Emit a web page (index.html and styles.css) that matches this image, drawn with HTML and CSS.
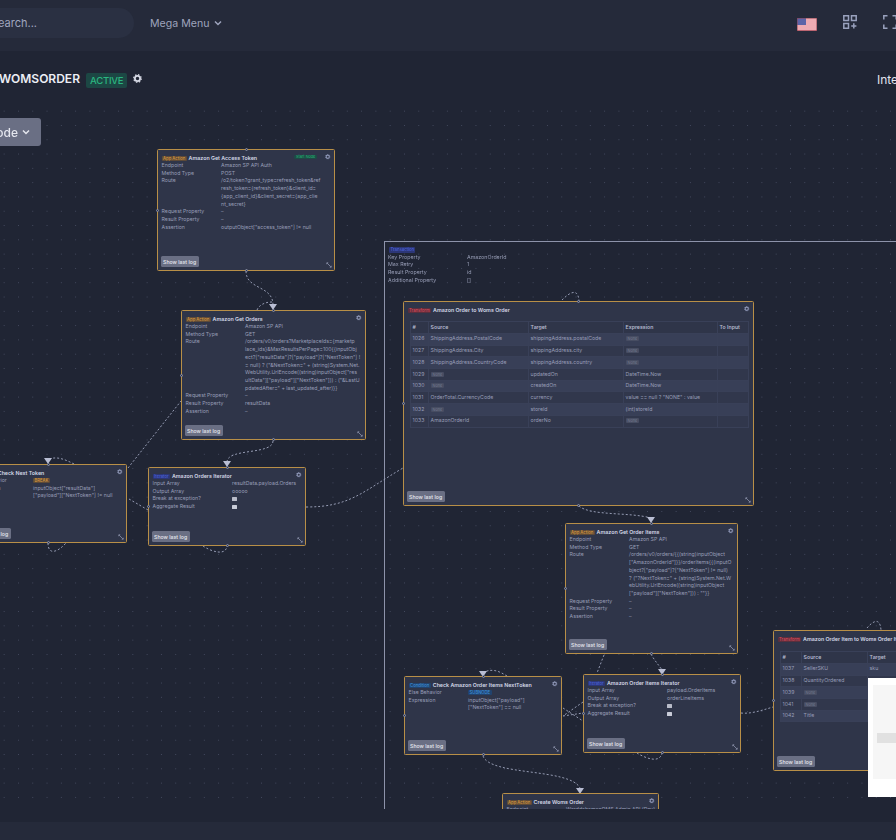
FILE: index.html
```html
<!DOCTYPE html>
<html>
<head>
<meta charset="UTF-8">
<meta name="viewport" content="width=device-width, initial-scale=1">
<title>WOMSORDER</title>
<link rel="stylesheet" href="styles.css">
</head>
<body>

<svg class="sprite" width="0" height="0">
	<symbol id="gear" viewBox="0 0 10 10">
		<circle cx="5" cy="5" r="2.9" fill="none" stroke="currentColor" stroke-width="2"/>
		<circle cx="5" cy="5" r="4.2" fill="none" stroke="currentColor" stroke-width="1.4" stroke-dasharray="1.6 1.7"/>
	</symbol>
	<symbol id="expand" viewBox="0 0 8 8">
		<path d="M1.5 1.5L6.5 6.5M1 3V1H3M7 5V7H5" fill="none" stroke="currentColor" stroke-width="0.9"/>
	</symbol>
	<symbol id="chevron" viewBox="0 0 10 10">
		<path d="M2 3.5L5 6.5L8 3.5" fill="none" stroke="currentColor" stroke-width="1.5"/>
	</symbol>
</svg>

<header class="topbar">
	<div class="search">Search...</div>
	<div class="mega">Mega Menu <svg class="chev"><use href="#chevron"/></svg></div>
	<div class="topbar-icons">
		<svg class="flag" viewBox="0 0 20 13">
			<rect width="20" height="13" fill="#f3d3d8"/>
			<path d="M0 1h20M0 3h20M0 5h20M0 7h20M0 9h20M0 11h20M0 12.6h20" stroke="#e8848f" stroke-width="1"/>
			<rect width="9" height="7" fill="#5c64a8"/>
			<rect x="0.25" y="0.25" width="19.5" height="12.5" fill="none" stroke="#8e3f4c" stroke-width="0.5"/>
		</svg>
		<svg class="icon-apps" viewBox="0 0 14 14">
			<path d="M.8.8h4.7v4.7H.8zM8.5.8h4.7v4.7H8.5zM.8 8.5h4.7v4.7H.8zM10.8 8.3v5.2M8.2 10.9h5.2" fill="none" stroke="#99a1bd" stroke-width="1.5"/>
		</svg>
		<svg class="icon-full" viewBox="0 0 14 14">
			<path d="M.8 4.5V.8h3.7M9.5.8h3.7v3.7M.8 9.5v3.7h3.7M9.5 13.2h3.7V9.5" fill="none" stroke="#99a1bd" stroke-width="1.5"/>
		</svg>
	</div>
</header>

<div class="titlebar">
	<h1>WOMSORDER</h1>
	<span class="status">ACTIVE</span>
	<svg class="title-gear"><use href="#gear"/></svg>
	<span class="title-right">Integration</span>
</div>

<main class="canvas">
	<button class="add-node">Add Node <svg class="chev"><use href="#chevron"/></svg></button>

	<div class="group">
		<span class="tag tag-blue">Transaction</span>
		<div class="props props-wide">
			<span>Key Property</span><span>AmazonOrderId</span>
			<span>Max Retry</span><span>1</span>
			<span>Result Property</span><span>id</span>
			<span>Additional Property</span><span>[]</span>
		</div>
	</div>

	<svg class="edges" viewBox="0 0 896 704">
		<g transform="translate(0 -105)">
			<g class="edge-lines">
				<path d="M246 271C246 290 273 285 273 305"/>
				<path d="M257 310C259 305 265 302 272 302"/>
				<path d="M273 441C273 455 227 448 227 462"/>
				<path d="M128 468L181 401"/>
				<path d="M129 499L148 510"/>
				<path d="M74 464C66 460 58 456 49 459"/>
				<path d="M48 543C48 556 58 552 66 543"/>
				<path d="M203 546C212 552 226 556 227 546"/>
				<path d="M306 507C350 507 362 492 403 468"/>
				<path d="M562 300C568 294 578 286 579 301"/>
				<path d="M579 506C590 516 630 512 651 518"/>
				<path d="M651 654C654 660 658 664 662 670"/>
				<path d="M604 655L597 673"/>
				<path d="M583 702L563 716"/>
				<path d="M563 708L583 721"/>
				<path d="M563 716L583 713"/>
				<path d="M507 676C500 672 494 668 484 672"/>
				<path d="M483 756C490 776 570 768 580 788"/>
				<path d="M637 753C645 758 660 764 662 753"/>
				<path d="M741 713C750 714 760 711 773 707"/>
				<path d="M867 628C872 622 880 616 881 630"/>
			</g>
			<g class="edge-arrows">
				<path d="M269 304h8l-4 6z"/>
				<path d="M223 461h8l-4 6z"/>
				<path d="M44 458h8l-4 6z"/>
				<path d="M647 517h8l-4 6z"/>
				<path d="M658 669h8l-4 6z"/>
				<path d="M479 671h8l-4 6z"/>
				<path d="M576 788h8l-4 6z"/>
			</g>
		</g>
	</svg>

	<section class="node node-token">
		<svg class="node-gear"><use href="#gear"/></svg>
		<span class="tag-start">Start Node</span>
		<div class="node-title"><span class="tag tag-orange">App Action</span> Amazon Get Access Token</div>
		<div class="props">
			<span>Endpoint</span><span>Amazon SP API Auth</span>
			<span>Method Type</span><span>POST</span>
			<span>Route</span><span>/o2/token?grant_type=refresh_token&amp;ref<br>resh_token={refresh_token}&amp;client_id=<br>{app_client_id}&amp;client_secret={app_clie<br>nt_secret}</span>
			<span>Request Property</span><span>–</span>
			<span>Result Property</span><span>–</span>
			<span>Assertion</span><span>outputObject["access_token"] != null</span>
		</div>
		<button class="log-btn">Show last log</button>
		<svg class="node-expand"><use href="#expand"/></svg>
		<i class="handle handle-top"></i><i class="handle handle-left"></i><i class="handle handle-bottom"></i>
	</section>

	<section class="node node-orders">
		<svg class="node-gear"><use href="#gear"/></svg>
		<div class="node-title"><span class="tag tag-orange">App Action</span> Amazon Get Orders</div>
		<div class="props">
			<span>Endpoint</span><span>Amazon SP API</span>
			<span>Method Type</span><span>GET</span>
			<span>Route</span><span>/orders/v0/orders?MarketplaceIds={marketp<br>lace_ids}&amp;MaxResultsPerPage=100{{inputObj<br>ect?["resultData"]?["payload"]?["NextToken"] !<br>= null) ? ("&amp;NextToken=" + (string)System.Net.<br>WebUtility.UrlEncode((string)inputObject["res<br>ultData"]["payload"]["NextToken"])) : ("&amp;LastU<br>pdatedAfter=" + last_updated_after)}}</span>
			<span>Request Property</span><span>–</span>
			<span>Result Property</span><span>resultData</span>
			<span>Assertion</span><span>–</span>
		</div>
		<button class="log-btn">Show last log</button>
		<svg class="node-expand"><use href="#expand"/></svg>
		<i class="handle handle-top"></i><i class="handle handle-left"></i><i class="handle handle-bottom"></i>
	</section>

	<section class="node node-next">
		<svg class="node-gear"><use href="#gear"/></svg>
		<div class="node-title"><span class="tag tag-sky">Condition</span> Check Next Token</div>
		<div class="props">
			<span>Else Behavior</span><span><b class="tag tag-orange">BREAK</b></span>
			<span>Expression</span><span>inputObject["resultData"]<br>["payload"]["NextToken"] != null</span>
		</div>
		<button class="log-btn">Show last log</button>
		<svg class="node-expand"><use href="#expand"/></svg>
		<i class="handle handle-top"></i><i class="handle handle-left"></i><i class="handle handle-bottom"></i>
	</section>

	<section class="node node-iter">
		<svg class="node-gear"><use href="#gear"/></svg>
		<div class="node-title"><span class="tag tag-blue">Iterator</span> Amazon Orders Iterator</div>
		<div class="props props-iter">
			<span>Input Array</span><span>resultData.payload.Orders</span>
			<span>Output Array</span><span>ooooo</span>
			<span>Break at exception?</span><span><i class="check on"></i></span>
			<span>Aggregate Result</span><span><i class="check"></i></span>
		</div>
		<button class="log-btn">Show last log</button>
		<svg class="node-expand"><use href="#expand"/></svg>
		<i class="handle handle-top"></i><i class="handle handle-left"></i><i class="handle handle-bottom"></i>
	</section>

	<section class="node node-transform">
		<svg class="node-gear"><use href="#gear"/></svg>
		<div class="node-title"><span class="tag tag-red">Transform</span> Amazon Order to Woms Order</div>
		<table class="map map-main">
			<tr><th>#</th><th>Source</th><th>Target</th><th>Expression</th><th>To Input</th></tr>
			<tr><td>1026</td><td>ShippingAddress.PostalCode</td><td>shippingAddress.postalCode</td><td><em>None</em></td><td></td></tr>
			<tr><td>1027</td><td>ShippingAddress.City</td><td>shippingAddress.city</td><td><em>None</em></td><td></td></tr>
			<tr><td>1028</td><td>ShippingAddress.CountryCode</td><td>shippingAddress.country</td><td><em>None</em></td><td></td></tr>
			<tr><td>1029</td><td><em>None</em></td><td>updatedOn</td><td>DateTime.Now</td><td></td></tr>
			<tr><td>1030</td><td><em>None</em></td><td>createdOn</td><td>DateTime.Now</td><td></td></tr>
			<tr><td>1031</td><td>OrderTotal.CurrencyCode</td><td>currency</td><td>value == null ? "NONE" : value</td><td></td></tr>
			<tr><td>1032</td><td><em>None</em></td><td>storeId</td><td>(int)storeId</td><td></td></tr>
			<tr><td>1033</td><td>AmazonOrderId</td><td>orderNo</td><td><em>None</em></td><td></td></tr>
		</table>
		<button class="log-btn">Show last log</button>
		<svg class="node-expand"><use href="#expand"/></svg>
		<i class="handle handle-top"></i><i class="handle handle-left"></i><i class="handle handle-bottom"></i>
	</section>

	<section class="node node-items">
		<svg class="node-gear"><use href="#gear"/></svg>
		<div class="node-title"><span class="tag tag-orange">App Action</span> Amazon Get Order Items</div>
		<div class="props">
			<span>Endpoint</span><span>Amazon SP API</span>
			<span>Method Type</span><span>GET</span>
			<span>Route</span><span>/orders/v0/orders/{{(string)inputObject<br>["AmazonOrderId"]}}/orderItems{{(inputO<br>bject?["payload"]?["NextToken"] != null)<br>? ("?NextToken=" + (string)System.Net.W<br>ebUtility.UrlEncode((string)inputObject<br>["payload"]["NextToken"])) : ""}}</span>
			<span>Request Property</span><span>–</span>
			<span>Result Property</span><span>–</span>
			<span>Assertion</span><span>–</span>
		</div>
		<button class="log-btn">Show last log</button>
		<svg class="node-expand"><use href="#expand"/></svg>
		<i class="handle handle-top"></i><i class="handle handle-left"></i><i class="handle handle-bottom"></i>
	</section>

	<section class="node node-check">
		<svg class="node-gear"><use href="#gear"/></svg>
		<div class="node-title"><span class="tag tag-sky">Condition</span> Check Amazon Order Items NextToken</div>
		<div class="props">
			<span>Else Behavior</span><span><b class="tag tag-sky">SUBNODE</b></span>
			<span>Expression</span><span>inputObject["payload"]<br>["NextToken"] == null</span>
		</div>
		<button class="log-btn">Show last log</button>
		<svg class="node-expand"><use href="#expand"/></svg>
		<i class="handle handle-top"></i><i class="handle handle-left"></i><i class="handle handle-bottom"></i>
	</section>

	<section class="node node-iter2">
		<svg class="node-gear"><use href="#gear"/></svg>
		<div class="node-title"><span class="tag tag-blue">Iterator</span> Amazon Order Items Iterator</div>
		<div class="props props-iter">
			<span>Input Array</span><span>payload.OrderItems</span>
			<span>Output Array</span><span>orderLineItems</span>
			<span>Break at exception?</span><span><i class="check on"></i></span>
			<span>Aggregate Result</span><span><i class="check"></i></span>
		</div>
		<button class="log-btn">Show last log</button>
		<svg class="node-expand"><use href="#expand"/></svg>
		<i class="handle handle-top"></i><i class="handle handle-left"></i><i class="handle handle-bottom"></i>
	</section>

	<section class="node node-create">
		<svg class="node-gear"><use href="#gear"/></svg>
		<div class="node-title"><span class="tag tag-orange">App Action</span> Create Woms Order</div>
		<div class="props">
			<span>Endpoint</span><span>WarddahamanOMS Admin API (Dev)</span>
		</div>
	</section>

	<section class="node node-transform2">
		<div class="node-title"><span class="tag tag-red">Transform</span> Amazon Order Item to Woms Order Item</div>
		<table class="map map-items">
			<tr><th>#</th><th>Source</th><th>Target</th></tr>
			<tr><td>1037</td><td>SellerSKU</td><td>sku</td></tr>
			<tr><td>1038</td><td>QuantityOrdered</td><td>quantity</td></tr>
			<tr><td>1039</td><td><em>None</em></td><td></td></tr>
			<tr><td>1041</td><td><em>None</em></td><td></td></tr>
			<tr><td>1042</td><td>Title</td><td></td></tr>
		</table>
		<button class="log-btn">Show last log</button>
		<i class="handle handle-left"></i>
	</section>

	<div class="popup"><div class="popup-body"><div class="popup-bar"></div></div></div>
</main>

<footer class="footer"></footer>

</body>
</html>
```

FILE: styles.css
```css
* {
	box-sizing: border-box;
}

html, body {
	margin: 0;
	height: 840px;
	overflow: hidden;
}

body {
	display: flex;
	flex-direction: column;
	background-color: #202534;
	color: #989eb7;
	font-family: Inter, "Liberation Sans", sans-serif;
}

.sprite {
	position: absolute;
}

/* top bar */
.topbar {
	display: flex;
	align-items: center;
	height: 51px;
	padding-bottom: 5px;
	flex: none;
	background-color: #252a3a;
}

.search {
	width: 164px;
	height: 30px;
	margin-left: -30px;
	padding: 8px 0 0 21px;
	border-radius: 15px;
	background-color: #2a3042;
	font-size: 11px;
	color: #a0a6bf;
}

.mega {
	display: flex;
	align-items: center;
	gap: 4px;
	margin-left: 16px;
	font-size: 10.6px;
	color: #9ea4bd;
}

.chev {
	width: 10px;
	height: 10px;
	flex: none;
}

.topbar-icons {
	display: flex;
	align-items: center;
	margin-left: auto;
	margin-right: -1px;
}

.flag {
	width: 20px;
	height: 13px;
	margin-top: 3px;
}

.icon-apps {
	width: 14px;
	height: 14px;
	margin: -2px 0 0 26px;
}

.icon-full {
	width: 14px;
	height: 14px;
	margin: -2px 0 0 26px;
}

/* title row */
.titlebar {
	display: flex;
	align-items: center;
	height: 54px;
	padding-top: 2px;
	flex: none;
	font-size: 12px;
	color: #e2e4ee;
}

.titlebar h1 {
	margin: 0 0 1px -1px;
	font-size: 12px;
	font-weight: 600;
	color: #eceef5;
}

.status {
	margin: 3px 0 0 6px;
	padding: 2px 4px;
	border-radius: 2px;
	background-color: #1c4744;
	font-size: 9.5px;
	font-weight: 500;
	letter-spacing: -0.2px;
	color: #2bb680;
}

.title-gear {
	width: 9px;
	height: 9px;
	margin: 0 0 1px 6px;
	color: #d5d8e4;
}

.title-right {
	margin-left: auto;
	margin-right: -20px;
	width: 39px;
	white-space: nowrap;
	overflow: hidden;
}

/* flow canvas */
.canvas {
	position: relative;
	height: 704px;
	flex: none;
	overflow: hidden;
	background-image: radial-gradient(#454b60 0.7px, transparent 0.8px);
	background-size: 14.3px 14.3px;
	background-position: -3px -1px;
	filter: blur(0.35px);
}

.add-node {
	position: absolute;
	left: -37px;
	top: 13px;
	width: 78px;
	height: 28px;
	padding: 0 10px 0 0;
	display: flex;
	align-items: center;
	justify-content: flex-end;
	gap: 3px;
	border: 0;
	border-radius: 3px;
	background-color: #6a6f84;
	font: 500 12px Inter, sans-serif;
	color: #e4e6ee;
	white-space: nowrap;
}

.group {
	position: absolute;
	left: 384px;
	top: 136px;
	width: 600px;
	height: 700px;
	padding: 5px 3px;
	border: 1.5px solid #8d93aa;
	font-size: 5.3px;
	line-height: 7.7px;
}

.group .tag {
	display: block;
	width: 26px;
	margin-left: 1px;
}

.edges {
	position: absolute;
	left: 0;
	top: 0;
	width: 896px;
	height: 704px;
}

.edge-lines path {
	fill: none;
	stroke: #a3a9c2;
	stroke-width: 0.9;
	stroke-dasharray: 2 2;
}

.edge-arrows path {
	fill: #b9bed4;
}

/* nodes */
.node {
	position: absolute;
	display: flex;
	flex-direction: column;
	padding: 4px 3px 3px 3.6px;
	border: 1.4px solid #b88f47;
	border-radius: 1.5px;
	background-color: #2f3549;
	font-size: 5.2px;
	line-height: 7.7px;
	white-space: nowrap;
}

.node-token { left: 157px; top: 44px; width: 178px; height: 122px; }
.node-orders { left: 181px; top: 205px; width: 185px; height: 130px; }
.node-next { left: -31px; top: 359px; width: 158px; height: 79px; }
.node-iter { left: 148px; top: 362px; width: 158px; height: 79px; }
.node-transform { left: 403px; top: 196px; width: 351px; height: 205px; }
.node-items { left: 565px; top: 418px; width: 173px; height: 131px; }
.node-check { left: 404px; top: 571px; width: 158px; height: 79px; }
.node-iter2 { left: 583px; top: 569px; width: 158px; height: 79px; }
.node-create { left: 502px; top: 688px; width: 157px; height: 79px; }
.node-transform2 { left: 773px; top: 525px; width: 351px; height: 141px; }

.node-title {
	height: 8px;
	font-size: 5.3px;
	line-height: 8px;
	font-weight: 600;
	color: #d3d7e6;
}

.tag {
	display: inline-block;
	padding: 0 1.5px;
	margin-right: 0.5px;
	border-radius: 1px;
	font-size: 4.2px;
	line-height: 5.5px;
	font-weight: 500;
	vertical-align: 0.3px;
}

.tag-orange {
	background-color: #5d4a38;
	color: #d99a3e;
}

.tag-blue {
	background-color: #2c3676;
	color: #4a60d8;
}

.tag-sky {
	background-color: #21436e;
	color: #3d90d8;
}

.tag-red {
	background-color: #5a2f3d;
	color: #dc4858;
}

.tag-start {
	position: absolute;
	left: 136px;
	top: 4.5px;
	padding: 0 2px;
	border-radius: 1px;
	background-color: #1d4a45;
	font-size: 3.8px;
	line-height: 4.5px;
	color: #25b978;
}

.props {
	display: grid;
	grid-template-columns: 59.5px 1fr;
}

.props-wide {
	grid-template-columns: 79px 1fr;
	margin-top: 1px;
}

.props-iter {
	grid-template-columns: 79.5px 1fr;
}

.check {
	display: block;
	width: 4.5px;
	height: 4.5px;
	margin-top: 1.5px;
	border-radius: 0.5px;
	background-color: #c9ccd8;
}

.check.on {
	background-color: #b9bcc9;
}

.log-btn {
	align-self: flex-start;
	margin: auto 0 0 -1px;
	height: 11px;
	padding: 0 2.5px;
	border: 0;
	border-radius: 1.5px;
	background-color: #6a6f84;
	font: 500 5.2px Inter, sans-serif;
	color: #e7e9f0;
}

.node-gear {
	position: absolute;
	right: 3.5px;
	top: 4px;
	width: 5.5px;
	height: 5.5px;
	color: #8d95b5;
}

.node-expand {
	position: absolute;
	right: 2.5px;
	bottom: 2.5px;
	width: 6px;
	height: 6px;
	color: #9ea4bd;
}

.handle {
	position: absolute;
	width: 3px;
	height: 3px;
	border: 0.6px solid #8d93aa;
	border-radius: 50%;
	background-color: #2f3549;
}

.handle-top { left: calc(50% - 1.5px); top: -2px; }
.handle-bottom { left: calc(50% - 1.5px); bottom: -2px; }
.handle-left { left: -2px; top: calc(50% - 1.5px); }

/* mapping tables */
.map {
	border-collapse: collapse;
	table-layout: fixed;
	margin: 7px 0 0 2px;
}

.map-main {
	width: 338px;
}

.map-items {
	width: 199px;
	margin-top: 8px;
}

.map th, .map td {
	height: 11.7px;
	padding: 0 0 0 2px;
	border: 0.4px solid #394058;
	text-align: left;
	overflow: hidden;
}

.map th {
	height: 12px;
	font-weight: 600;
	color: #b4b9ce;
}

.map tr:nth-child(even) {
	background-color: #383f57;
}

.map tr:nth-child(odd) td {
	background-color: #31374c;
}

.map th:nth-child(1) { width: 18px; }
.map-main th:nth-child(2) { width: 100px; }
.map-main th:nth-child(3) { width: 95px; }
.map-main th:nth-child(4) { width: 94px; }
.map-main th:nth-child(5) { width: 31px; }
.map-items th:nth-child(1) { width: 21px; }
.map-items th:nth-child(2) { width: 66px; }

.map em {
	display: inline-block;
	padding: 0 2px;
	border-radius: 1px;
	background-color: #474d62;
	font-size: 3.8px;
	line-height: 5px;
	font-style: normal;
	color: #767c92;
}

.popup {
	position: absolute;
	left: 868px;
	top: 573px;
	width: 60px;
	height: 119px;
	padding: 7px 0 18px 5px;
	background-color: #ffffff;
}

.popup-body {
	height: 94px;
	padding: 48px 0 0 4px;
	background-color: #f6f6f6;
}

.popup-bar {
	height: 10px;
	background-color: #e1e1e1;
}

.footer {
	height: 18px;
	margin-top: 13px;
	flex: none;
	background-color: #252a3a;
}
```
